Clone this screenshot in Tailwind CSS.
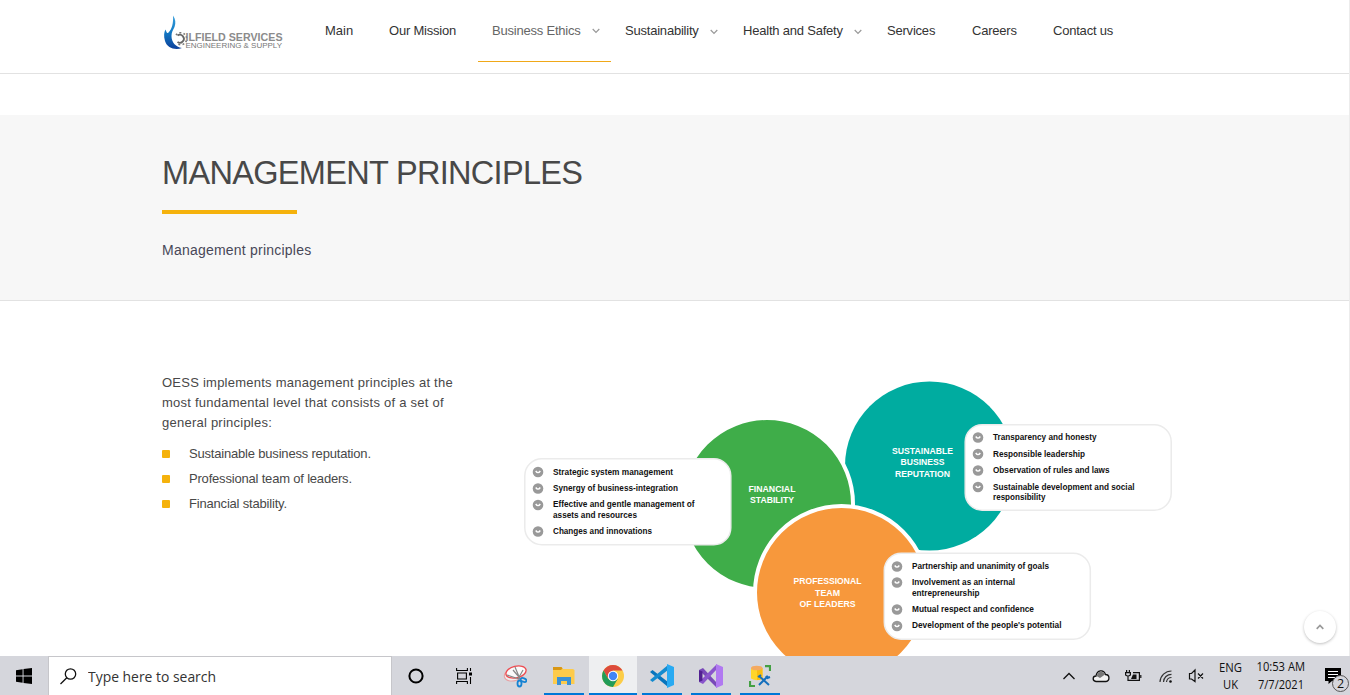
<!DOCTYPE html>
<html lang="en">
<head>
<meta charset="utf-8">
<title>Management principles</title>
<script src="https://cdn.jsdelivr.net/npm/@tailwindcss/browser@4"></script>
</head>
<body class="h-[695px] w-[1350px] overflow-hidden bg-white font-['Liberation_Sans',Arial,sans-serif] text-[#484848]">
<div class="flex h-[695px] flex-col">
<div class="relative h-[656px] overflow-hidden border-r border-[#ececec]">
  <header class="flex h-[74px] items-start border-b border-[#e2e2e2] pl-[162px]">
    <svg class="mt-[12px] h-10 w-[124px] shrink-0" viewBox="0 0 124 40" font-family="Liberation Sans, Arial, sans-serif">
      <defs><linearGradient id="drop" x1="0" y1="0" x2="0" y2="1"><stop offset="0" stop-color="#39a0dc"/><stop offset=".5" stop-color="#1279c4"/><stop offset="1" stop-color="#0d419b"/></linearGradient></defs>
      <path d="M15.500 23.500A4 4 0 1 1 15.500 30" fill="none" stroke="#666" stroke-width="1.800"/>
      <path d="M14 23A6 6 0 1 1 15 31.500" fill="none" stroke="#777" stroke-width="1.600" stroke-dasharray="1.800 2.200"/>
      <path d="M11 3.500C13.500 7 14 11 12.500 15C11 18.500 9.500 20 9.500 24C9.500 30 13.500 35 20 36C13 38.500 5 36 3 29C1.500 24 2 20 3.500 17.500C4.500 20 5 22 6.500 20.500C10 17 11.500 11 11 3.500Z" fill="url(#drop)"/>
      <text x="23.500" y="28.600" font-size="11" font-weight="700" fill="#8b8b8b" textLength="97" lengthAdjust="spacingAndGlyphs">ILFIELD SERVICES</text>
      <text x="23.500" y="35.800" font-size="7.800" fill="#777" textLength="96.500" lengthAdjust="spacingAndGlyphs">ENGINEERING &amp; SUPPLY</text>
    </svg>
    <nav class="flex h-[62px] w-[860px] text-[13px] leading-[62px] tracking-[-0.210px] whitespace-nowrap">
      <a class="ml-[39px] w-16 shrink-0 tracking-[0px] text-[#333]">Main</a>
      <a class="w-[89px] shrink-0 text-[#333]">Our Mission</a>
      <a class="flex w-[133px] shrink-0 items-center gap-[11px] border-b border-[#f0a818] pl-[14px] text-[#666]"><span>Business Ethics</span><svg class="mt-[1px] h-[6px] w-2" viewBox="0 0 8 6" fill="none" stroke="#999" stroke-width="1.200"><path d="M.7 1 4 4.300 7.300 1"/></svg></a>
      <a class="ml-[14px] flex w-[118px] shrink-0 items-center gap-[11px] text-[#333]"><span>Sustainability</span><svg class="mt-[1px] h-[6px] w-2" viewBox="0 0 8 6" fill="none" stroke="#999" stroke-width="1.200"><path d="M.7 1 4 4.300 7.300 1"/></svg></a>
      <a class="flex w-[144px] shrink-0 items-center gap-[11px] text-[#333]"><span>Health and Safety</span><svg class="mt-[1px] h-[6px] w-2" viewBox="0 0 8 6" fill="none" stroke="#999" stroke-width="1.200"><path d="M.7 1 4 4.300 7.300 1"/></svg></a>
      <a class="w-[85px] shrink-0 text-[#333]">Services</a>
      <a class="w-[81px] shrink-0 text-[#333]">Careers</a>
      <a class="shrink-0 text-[#333]">Contact us</a>
    </nav>
  </header>
  <section class="mt-[41px] h-[186px] border-b border-[#e2e2e2] bg-[#f7f7f7] pt-[38px] pl-[162px]">
    <h1 class="text-[32.500px] leading-[40px] tracking-[-0.680px] whitespace-nowrap text-[#484848]">MANAGEMENT PRINCIPLES</h1>
    <div class="mt-[17px] h-1 w-[135px] bg-[#f5b20c]"></div>
    <p class="mt-[26px] text-[14px] leading-5 tracking-[0.220px] text-[#484858]">Management principles</p>
  </section>
  <main class="flex">
    <div class="w-[325px] shrink-0 pt-[72px] pl-[162px] whitespace-nowrap">
      <p class="text-[13px] leading-5 tracking-[0.240px]">OESS implements management principles at the<br>most fundamental level that consists of a set of<br>general principles:</p>
      <ul class="mt-[8px] text-[13px] leading-[25px] tracking-[-0.190px]">
        <li class="flex items-center gap-[19px]"><i class="h-2 w-2 shrink-0 rounded-[1px] bg-[#f5b20c]"></i>Sustainable business reputation.</li>
        <li class="flex items-center gap-[19px]"><i class="h-2 w-2 shrink-0 rounded-[1px] bg-[#f5b20c]"></i>Professional team of leaders.</li>
        <li class="flex items-center gap-[19px]"><i class="h-2 w-2 shrink-0 rounded-[1px] bg-[#f5b20c]"></i>Financial stability.</li>
      </ul>
    </div>
    <svg class="ml-[187px] mt-[69px] h-[286px] w-[680px] shrink-0" viewBox="512 370 680 286" font-family="Liberation Sans, Arial, sans-serif" font-weight="700">
      <defs>
        <g id="tick"><circle r="5.300" fill="#999"/><path d="M-2.300 -1 Q0 2.300 2.300 -1" fill="none" stroke="#fff" stroke-width="1.400"/></g>
      </defs>
      <circle cx="929.500" cy="466" r="84.500" fill="#00aca0"/>
      <circle cx="767" cy="504" r="86" fill="#3fad49" stroke="#fff" stroke-width="4"/>
      <circle cx="841.500" cy="592.500" r="86.500" fill="#f7983c" stroke="#fff" stroke-width="4"/>
      <g fill="#fff" stroke="#ebebeb" stroke-width="1.500">
        <rect x="524.800" y="458.800" width="206" height="86" rx="17"/>
        <rect x="965.200" y="424.700" width="206" height="85.600" rx="17"/>
        <rect x="884.300" y="553.200" width="206" height="86" rx="17"/>
      </g>
      <g fill="#fff" font-size="8.800" text-anchor="middle">
        <text x="772" y="492" textLength="47" lengthAdjust="spacingAndGlyphs">FINANCIAL</text>
        <text x="772" y="503" textLength="44" lengthAdjust="spacingAndGlyphs">STABILITY</text>
        <text x="922.500" y="454" textLength="61" lengthAdjust="spacingAndGlyphs">SUSTAINABLE</text>
        <text x="922.500" y="465" textLength="44" lengthAdjust="spacingAndGlyphs">BUSINESS</text>
        <text x="922.500" y="476.500" textLength="55" lengthAdjust="spacingAndGlyphs">REPUTATION</text>
        <text x="827.500" y="584" textLength="68" lengthAdjust="spacingAndGlyphs">PROFESSIONAL</text>
        <text x="827.500" y="595.500" textLength="25" lengthAdjust="spacingAndGlyphs">TEAM</text>
        <text x="827.500" y="607" textLength="56" lengthAdjust="spacingAndGlyphs">OF LEADERS</text>
      </g>
      <g fill="#111" font-size="8.700">
        <text x="553" y="474.500" textLength="120" lengthAdjust="spacingAndGlyphs">Strategic system management</text>
        <text x="553" y="491" textLength="125" lengthAdjust="spacingAndGlyphs">Synergy of business-integration</text>
        <text x="553" y="507.300" textLength="141.500" lengthAdjust="spacingAndGlyphs">Effective and gentle management of</text>
        <text x="553" y="517.500" textLength="84" lengthAdjust="spacingAndGlyphs">assets and resources</text>
        <text x="553" y="534" textLength="99" lengthAdjust="spacingAndGlyphs">Changes and innovations</text>
        <text x="993" y="440" textLength="103.500" lengthAdjust="spacingAndGlyphs">Transparency and honesty</text>
        <text x="993" y="456.500" textLength="92" lengthAdjust="spacingAndGlyphs">Responsible leadership</text>
        <text x="993" y="473" textLength="116.500" lengthAdjust="spacingAndGlyphs">Observation of rules and laws</text>
        <text x="993" y="489.500" textLength="141.500" lengthAdjust="spacingAndGlyphs">Sustainable development and social</text>
        <text x="993" y="499.500" textLength="52.500" lengthAdjust="spacingAndGlyphs">responsibility</text>
        <text x="912" y="569" textLength="137" lengthAdjust="spacingAndGlyphs">Partnership and unanimity of goals</text>
        <text x="912" y="585.300" textLength="103" lengthAdjust="spacingAndGlyphs">Involvement as an internal</text>
        <text x="912" y="595.500" textLength="67.500" lengthAdjust="spacingAndGlyphs">entrepreneurship</text>
        <text x="912" y="612" textLength="122" lengthAdjust="spacingAndGlyphs">Mutual respect and confidence</text>
        <text x="912" y="628.300" textLength="149.500" lengthAdjust="spacingAndGlyphs">Development of the people's potential</text>
      </g>
      <use href="#tick" x="538" y="472"/><use href="#tick" x="538" y="488.500"/><use href="#tick" x="538" y="505"/><use href="#tick" x="538" y="531.500"/>
      <use href="#tick" x="978" y="437.500"/><use href="#tick" x="978" y="454"/><use href="#tick" x="978" y="470.500"/><use href="#tick" x="978" y="487"/>
      <use href="#tick" x="897" y="566.500"/><use href="#tick" x="897" y="582.500"/><use href="#tick" x="897" y="609.500"/><use href="#tick" x="897" y="626"/>
    </svg>
  </main>
  <button class="absolute top-[611px] left-[1304px] flex h-8 w-8 items-center justify-center rounded-full bg-white shadow-[0_1px_3px_rgba(0,0,0,0.25)]"><svg class="h-[6px] w-2" viewBox="0 0 8 6" fill="none" stroke="#999" stroke-width="1.700"><path d="M.7 4.800 4 1.500 7.300 4.800"/></svg></button>
</div>

<footer class="flex h-[39px] bg-[#d5d6dc] font-['Open_Sans','Noto_Sans',sans-serif] text-black">
  <div class="flex w-12 shrink-0 items-center justify-center"><svg class="h-4 w-4" viewBox="0 0 16 16"><path d="M0 2.200 6.600 1.200V7.600H0ZM7.500 1.100 16 0V7.600H7.500ZM0 8.500H6.600V14.800L0 13.800ZM7.500 8.500H16V16L7.500 14.900Z"/></svg></div>
  <div class="flex w-[344px] shrink-0 items-center border border-b-0 border-[#c6c6ca] bg-white pl-[11px]">
    <svg class="h-[17px] w-[17px]" viewBox="0 0 17 17" fill="none" stroke="#111" stroke-width="1.300"><circle cx="10.500" cy="6" r="5.200"/><path d="M6.800 9.700.5 16"/></svg>
    <svg class="ml-[11px] h-[26px] w-[150px]" viewBox="0 0 150 26" fill="#333" font-size="14.800"><text x="0" y="18.500" textLength="128" lengthAdjust="spacingAndGlyphs">Type here to search</text></svg>
  </div>
  <div class="flex w-12 shrink-0 items-center justify-center"><svg class="h-4 w-4" viewBox="0 0 16 16" fill="none" stroke="#000" stroke-width="2"><circle cx="8" cy="8" r="6.600"/></svg></div>
  <div class="flex w-12 shrink-0 items-center justify-center"><svg class="h-4 w-4" viewBox="0 0 16 16" fill="none" stroke="#000" stroke-width="1.100"><path d="M.6 0V2.500H11.400V0M.6 16V13.500H11.400V16M1.600 5H10.400V11H1.600ZM14.500 0V3M14.500 9V16"/><path d="M13 4.500H16V7.500H13Z" fill="#000" stroke="none"/></svg></div>
  <div class="flex w-[54px] shrink-0 items-center justify-center"><svg class="h-6 w-6" viewBox="0 0 24 24"><ellipse cx="11.500" cy="10" rx="10.500" ry="6.500" transform="rotate(-18 11.500 10)" fill="#eee" stroke="#e8a0a2"/><ellipse cx="13" cy="8" rx="10.300" ry="5.800" transform="rotate(-14 13 8)" fill="#fafafa" stroke="#ed4b50" stroke-width="1.300"/><path d="M4 11 16 15M12 3 17 15M20 6 15 15M10 6 16 13" stroke="#888" stroke-width="1.200"/><g fill="none" stroke="#1683d3" stroke-width="1.800"><ellipse cx="16.500" cy="19.500" rx="2" ry="3"/><ellipse cx="20.500" cy="16" rx="3" ry="1.800" transform="rotate(20 20.500 16)"/></g></svg></div>
  <div class="flex w-[44px] shrink-0 justify-center"><div class="flex w-10 items-center justify-center border-b-2 border-[#0078d7]"><svg class="mt-[3px] h-5 w-[22px]" viewBox="0 0 22 20"><path d="M0 1H8.500L10 3H20L21.500 4V18H0Z" fill="#fdcb4b"/><path d="M0 1H8.500L9.500 2.500 8 4H0Z" fill="#d99714"/><path d="M4 19V11H18V19H14V15H8V19Z" fill="#3a91d6"/></svg></div></div>
  <div class="ml-[3px] flex w-12 shrink-0 items-center justify-center border-b-2 border-[#0078d7] bg-[#eeeff1]"><svg class="mt-[2px] h-[22px] w-[22px]" viewBox="0 0 22 22"><circle cx="11" cy="11" r="11" fill="#fccd47"/><path d="M1.500 5.500A11 11 0 0 1 20.500 5.500H11L6.200 13.700Z" fill="#dc4a3c"/><path d="M1.500 5.500A11 11 0 0 0 11 22L15.800 13.800 6.200 13.800Z" fill="#229c58"/><circle cx="11" cy="11" r="5.200" fill="#fff"/><circle cx="11" cy="11" r="4.200" fill="#4285f4"/></svg></div>
  <div class="ml-[5px] flex w-10 shrink-0 items-center justify-center border-b-2 border-[#0078d7]"><svg class="mt-[2px] h-6 w-6" viewBox="0 0 24 24"><path d="M0 8 2.500 6 18 18V23Z" fill="#0875bd"/><path d="M0 16 2.500 18 18 6V1Z" fill="#148bcf"/><path d="M17 0 24 3V21L17 24Z" fill="#29aaf2"/></svg></div>
  <div class="ml-[9px] flex w-10 shrink-0 items-center justify-center border-b-2 border-[#0078d7]"><svg class="mt-[2px] h-6 w-6" viewBox="0 0 24 24"><path d="M0 6 4 4 18 19V24Z" fill="#7949b8"/><path d="M0 18 4 20 18 5V0Z" fill="#8a55cc"/><path d="M0 6 3.500 7.500V16.500L0 18Z" fill="#512091"/><path d="M17 0 24 3V21L17 24Z" fill="#b179f1"/></svg></div>
  <div class="ml-[9px] flex w-10 shrink-0 items-center justify-center border-b-2 border-[#0078d7]"><svg class="mt-[2px] h-[22px] w-[22px]" viewBox="0 0 22 22"><path d="M2 3V13.500Q8 17 13.500 13.500V3Z" fill="#ffd52a"/><path d="M8 5V15Q11.500 15 13.500 13.500V3Z" fill="#f9bd11"/><ellipse cx="7.750" cy="3" rx="5.750" ry="2.300" fill="#f4aa61"/><path d="M16 1.200H21V6M1 16V21H6" fill="none" stroke="#43a043" stroke-width="2.200"/><path d="M10 11 20 20M19 11 10 20" stroke="#146fbd" stroke-width="2"/><path d="M9 12 12 10M17 11 18.500 13 21 12" fill="none" stroke="#146fbd" stroke-width="2"/></svg></div>
  <div class="ml-auto flex shrink-0 items-center">
    <svg class="h-5 w-[150px]" viewBox="1060 666 150 20" fill="none" stroke="#111" stroke-width="1.300">
      <path d="M1063.500 679 1069 673.500 1074.500 679"/>
      <path d="M1096 681.500C1092 681 1092.500 676 1096 676C1097 670 1103.500 669 1105.500 674.500C1110 674.500 1110 681 1106 681.500Z" fill="#f3f3f3"/><path d="M1096.500 676C1098 670.500 1103 670.500 1105 674.500L1100 678Z" fill="#777" stroke="none"/>
      <path d="M1133 672.600H1139.400V680.400H1130.500M1140.800 675V678M1126.600 670V672.500M1129.400 670V672.500M1125 672.600H1131M1125.600 673V675Q1128 677 1130.400 675V673M1128 676V680.400H1131" stroke-width="1.200"/><path d="M1133 674.500H1136.500V679H1131Z" fill="#111" stroke="none"/>
      <g stroke-width="1.200" stroke="#333"><path d="M1160 682A11.500 11.500 0 0 1 1171.500 671M1163.500 682A8 8 0 0 1 1171.500 674.300M1166.500 682A5 5 0 0 1 1171.500 677.500"/><circle cx="1170.500" cy="681.500" r="1.300" fill="#111" stroke="none"/></g>
      <path d="M1189.500 673.500H1191.500L1195 670V681.500L1191.500 679H1189.500ZM1198 673.500 1203 678.500M1203 673.500 1198 678.500" stroke-width="1.200"/>
    </svg>
    <svg class="h-[39px] w-[140px]" viewBox="1210 656 140 39" font-size="12" fill="#111">
      <text x="1219" y="672" textLength="23" lengthAdjust="spacingAndGlyphs">ENG</text>
      <text x="1223" y="689" textLength="15" lengthAdjust="spacingAndGlyphs">UK</text>
      <text x="1256.500" y="671" textLength="48.500" lengthAdjust="spacingAndGlyphs">10:53 AM</text>
      <text x="1258" y="689" textLength="46" lengthAdjust="spacingAndGlyphs">7/7/2021</text>
      <path d="M1325 668H1341V681H1332L1328.500 684V681H1325Z" fill="#000"/>
      <path d="M1328 671.500H1338M1328 674.500H1338M1328 677.500H1335" stroke="#fff"/>
      <circle cx="1340.500" cy="683.500" r="8" fill="#d5d6dc" stroke="#555"/>
      <text x="1337" y="688" font-size="12.500">2</text>
    </svg>
  </div>
</footer>
</div>
</body>
</html>
